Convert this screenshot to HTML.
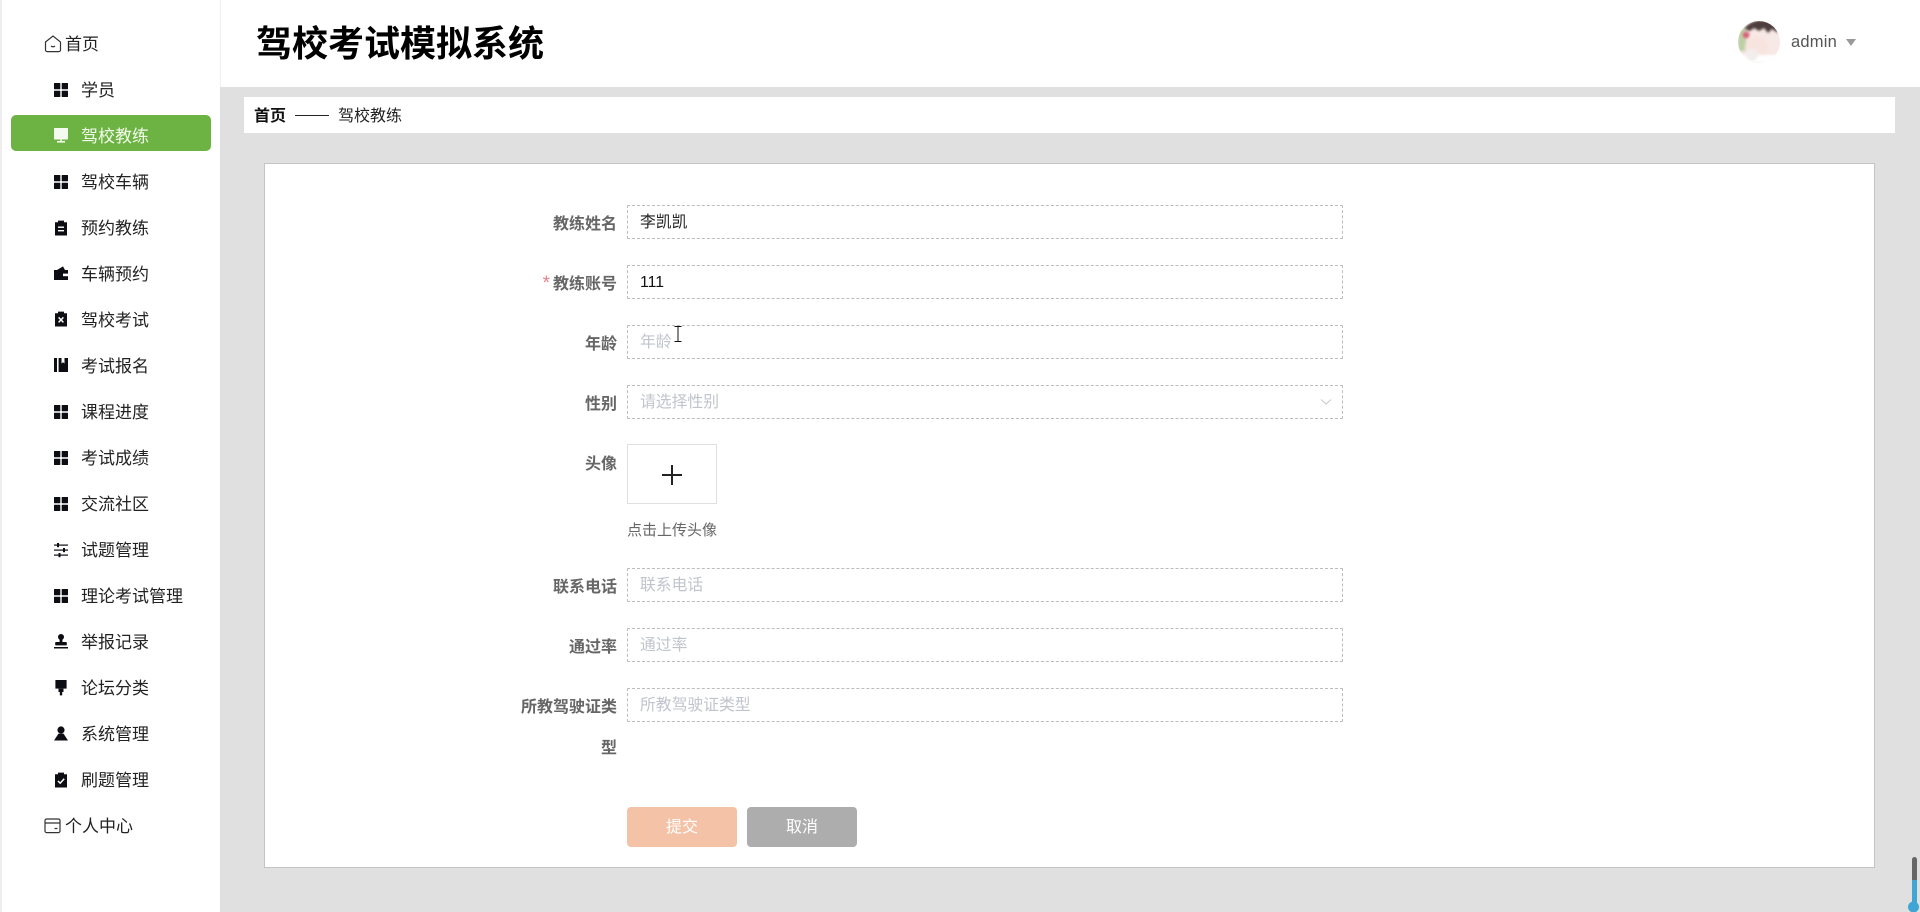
<!DOCTYPE html>
<html lang="zh-CN">
<head>
<meta charset="utf-8">
<title>驾校考试模拟系统</title>
<style>
html,body{margin:0;padding:0;width:1920px;height:912px;overflow:hidden;background:#e0e0e0;font-family:"Liberation Sans","Noto Sans CJK SC",sans-serif;}
.a{position:absolute;white-space:nowrap;}
#side{position:absolute;left:0;top:0;width:220px;height:912px;background:#fff;box-shadow:inset 2px 0 0 #eeeeee;}
#head{position:absolute;left:220px;top:0;width:1700px;height:87px;background:#fff;border-left:1px solid #f0f0f0;box-sizing:border-box;}
.m{position:absolute;left:81px;font-size:17px;line-height:24px;color:#222;white-space:nowrap;}
.i{position:absolute;left:54px;width:14px;height:16px;overflow:visible;}
.box{position:absolute;left:627px;width:716px;height:34px;border:1px dashed #bcbcbc;box-sizing:border-box;background:#fff;font-size:15.8px;line-height:33px;padding-left:12px;color:#c0c4cc;white-space:nowrap;border-radius:1px;}
.l{position:absolute;right:1303px;font-size:16px;line-height:24px;font-weight:700;color:#666;white-space:nowrap;}
.btn{position:absolute;top:807px;width:110px;height:40px;border-radius:4px;color:#fff;font-size:16px;line-height:41px;text-align:center;}
</style>
</head>
<body>
<svg width="0" height="0" style="position:absolute">
<defs>
<g id="grid" fill="#0d0d14"><rect x="0" y="1" width="6.300" height="6.300" rx=".5"/><rect x="7.700" y="1" width="6.300" height="6.300" rx=".5"/><rect x="0" y="8.700" width="6.300" height="6.300" rx=".5"/><rect x="7.700" y="8.700" width="6.300" height="6.300" rx=".5"/></g>
</defs>
</svg>

<div id="side">
  <svg class="a" style="left:44px;top:35px" width="18" height="18" viewBox="0 0 18 18" fill="none" stroke="#333" stroke-width="1.2"><path d="M1.500 7 9 1l7.500 6v8a1.600 1.600 0 0 1-1.600 1.600H3.100A1.600 1.600 0 0 1 1.500 15z"/><path d="M7 11q2 1.600 4 0"/></svg>
  <div class="m" style="left:65px;top:33px">首页</div>

  <svg class="i" style="top:82px"><use href="#grid"/></svg>
  <div class="m" style="top:79px">学员</div>

  <div class="a" style="left:11px;top:115px;width:200px;height:36px;background:#6db344;border-radius:5px"></div>
  <svg class="i" style="top:128px" viewBox="0 0 14 16"><rect x="0" y="0" width="14" height="11.500" rx=".6" fill="#f5fbef"/><rect x="3" y="13" width="8" height="1.600" fill="#f5fbef"/><rect x="6" y="11" width="2" height="2.400" fill="#dcecc9"/></svg>
  <div class="m" style="top:125px;color:#f3faec">驾校教练</div>

  <svg class="i" style="top:174px"><use href="#grid"/></svg>
  <div class="m" style="top:171px">驾校车辆</div>

  <svg class="i" style="top:220px" viewBox="0 0 14 16"><path d="M1 2.200h3V.6h6v1.600h3V15.500H1z" fill="#0d0d14"/><rect x="4" y="6.500" width="6" height="1.400" fill="#fff"/><rect x="4" y="10" width="6" height="1.400" fill="#fff"/></svg>
  <div class="m" style="top:217px">预约教练</div>

  <svg class="i" style="top:265px" viewBox="0 0 14 16"><path d="M0 5h14v10H0z" fill="#0d0d14"/><path d="M3 5l6-3.600L11 5z" fill="#0d0d14"/><rect x="9" y="8.600" width="5" height="2.600" fill="#fff"/></svg>
  <div class="m" style="top:263px">车辆预约</div>

  <svg class="i" style="top:311px" viewBox="0 0 14 16"><path d="M1 2.200h3V.6h6v1.600h3V15.500H1z" fill="#0d0d14"/><path d="M4.600 6.400l4.800 5M9.400 6.400l-4.800 5" stroke="#fff" stroke-width="1.500" fill="none"/></svg>
  <div class="m" style="top:309px">驾校考试</div>

  <svg class="i" style="top:357px" viewBox="0 0 14 16"><rect x="0" y="1" width="3" height="14" fill="#0d0d14"/><path d="M4.600 1H14v14H4.600z" fill="#0d0d14"/><path d="M7.500 1h3v5.500L9 5.300 7.500 6.500z" fill="#fff"/></svg>
  <div class="m" style="top:355px">考试报名</div>

  <svg class="i" style="top:404px"><use href="#grid"/></svg>
  <div class="m" style="top:401px">课程进度</div>

  <svg class="i" style="top:450px"><use href="#grid"/></svg>
  <div class="m" style="top:447px">考试成绩</div>

  <svg class="i" style="top:496px"><use href="#grid"/></svg>
  <div class="m" style="top:493px">交流社区</div>

  <svg class="i" style="top:542px" viewBox="0 0 14 16" fill="#0d0d14"><rect x="0" y="2.500" width="14" height="1.200"/><rect x="0" y="7.500" width="14" height="1.200"/><rect x="0" y="12.500" width="14" height="1.200"/><rect x="3" y="1" width="2" height="4.200"/><rect x="9" y="6" width="2" height="4.200"/><rect x="4.500" y="11" width="2" height="4.200"/></svg>
  <div class="m" style="top:539px">试题管理</div>

  <svg class="i" style="top:588px"><use href="#grid"/></svg>
  <div class="m" style="top:585px">理论考试管理</div>

  <svg class="i" style="top:634px" viewBox="0 0 14 16" fill="#0d0d14"><circle cx="7" cy="3" r="3"/><rect x="5.600" y="5" width="2.800" height="3.500"/><rect x="1.200" y="8" width="11.600" height="3.400" rx=".8"/><rect x="0" y="13" width="14" height="1.500"/></svg>
  <div class="m" style="top:631px">举报记录</div>

  <svg class="i" style="top:680px" viewBox="0 0 14 16" fill="#0d0d14"><rect x="1.400" y="0" width="11.200" height="8.600"/><path d="M4.500 8.600h5v3.400H8.200v3.400H5.800V12H4.500z"/></svg>
  <div class="m" style="top:677px">论坛分类</div>

  <svg class="i" style="top:726px" viewBox="0 0 14 16" fill="#0d0d14"><circle cx="7" cy="4" r="3.600"/><path d="M4.500 7.600h5L14 14.500H0z"/></svg>
  <div class="m" style="top:723px">系统管理</div>

  <svg class="i" style="top:772px" viewBox="0 0 14 16"><path d="M1 2.200h3V.6h6v1.600h3V15.500H1z" fill="#0d0d14"/><path d="M4 9l2.200 2.200L10.200 6.800" stroke="#fff" stroke-width="1.500" fill="none"/></svg>
  <div class="m" style="top:769px">刷题管理</div>

  <svg class="a" style="left:44px;top:818px" width="18" height="16" viewBox="0 0 18 16" fill="none" stroke="#333" stroke-width="1.200"><rect x="1" y="1" width="15" height="13.600" rx="1.600"/><path d="M1 5h15M10.500 10.500h3"/></svg>
  <div class="m" style="left:65px;top:815px">个人中心</div>
</div>

<div id="head"></div>
<div class="a" style="left:256px;top:18px;font-size:36px;line-height:52px;font-weight:700;color:#000;">驾校考试模拟系统</div>

<svg class="a" style="left:1738px;top:21px" width="42" height="42" viewBox="0 0 42 42">
  <defs>
    <clipPath id="c"><circle cx="21" cy="21" r="21"/></clipPath>
    <filter id="b"><feGaussianBlur stdDeviation="1.200"/></filter>
  </defs>
  <g clip-path="url(#c)">
    <rect width="42" height="42" fill="#f7e9e5"/>
    <g filter="url(#b)">
      <rect x="0" y="8" width="8" height="22" fill="#bcd0a6"/>
      <circle cx="8" cy="14" r="3.500" fill="#d8607a"/>
      <path d="M6 8Q14-3 30 0q10 4 10 12l-6-4-4 4-4-5-5 3-5-3-4 3z" fill="#4d3c3d"/>
      <ellipse cx="19" cy="27" rx="12" ry="12" fill="#f8e4df"/>
      <path d="M0 34h42v8H0z" fill="#fff"/>
      <circle cx="14" cy="34" r="6" fill="#f3eeee"/>
    </g>
  </g>
</svg>
<div class="a" style="left:1791px;top:30px;font-size:16.500px;line-height:24px;color:#555;letter-spacing:.2px">admin</div>
<div class="a" style="left:1846px;top:39px;width:0;height:0;border-left:5px solid transparent;border-right:5px solid transparent;border-top:7px solid #999"></div>

<div class="a" style="left:244px;top:97px;width:1651px;height:36px;background:#fff"></div>
<div class="a" style="left:254px;top:105px;font-size:16px;line-height:24px;font-weight:700;color:#111">首页</div>
<div class="a" style="left:295px;top:115px;width:34px;height:1px;background:#222"></div>
<div class="a" style="left:338px;top:105px;font-size:16px;line-height:24px;color:#222">驾校教练</div>

<div class="a" style="left:264px;top:163px;width:1611px;height:705px;background:#fff;border:1px solid #c4c4c4;box-sizing:border-box"></div>

<div class="l" style="top:213px">教练姓名</div>
<div class="box" style="top:205px;color:#222">李凯凯</div>

<div class="l" style="top:273px"><span style="color:#e8808c;font-weight:400;font-size:19px;line-height:0;margin-right:3px">*</span>教练账号</div>
<div class="box" style="top:265px;color:#111">111</div>

<div class="l" style="top:333px">年龄</div>
<div class="box" style="top:325px">年龄</div>
<svg class="a" style="left:674px;top:326px" width="8" height="16" viewBox="0 0 8 16" fill="none" stroke="#111" stroke-width="1"><path d="M.5.5h7M.5 15.500h7M4 .5v15"/></svg>

<div class="l" style="top:393px">性别</div>
<div class="box" style="top:385px">请选择性别</div>
<svg class="a" style="left:1320px;top:398px" width="12" height="8" viewBox="0 0 12 8" fill="none" stroke="#ccc" stroke-width="1.100"><path d="M1 1.500 6 6l5-4.500"/></svg>

<div class="l" style="top:453px">头像</div>
<div class="a" style="left:627px;top:444px;width:90px;height:60px;border:1px solid #e0e0e0;box-sizing:border-box;background:#fff"></div>
<svg class="a" style="left:662px;top:465px" width="20" height="20" viewBox="0 0 20 20" stroke="#222" stroke-width="2"><path d="M0 10h20M10 0v20"/></svg>
<div class="a" style="left:627px;top:520px;font-size:15px;line-height:22px;color:#666">点击上传头像</div>

<div class="l" style="top:576px">联系电话</div>
<div class="box" style="top:568px">联系电话</div>

<div class="l" style="top:636px">通过率</div>
<div class="box" style="top:628px">通过率</div>

<div class="l" style="top:696px">所教驾驶证类</div>
<div class="box" style="top:688px">所教驾驶证类型</div>
<div class="l" style="top:737px">型</div>

<div class="btn" style="left:627px;background:#f4c3a7">提交</div>
<div class="btn" style="left:747px;background:#adadad">取消</div>

<svg class="a" style="left:1905px;top:855px" width="15" height="57" viewBox="0 0 15 57">
  <rect x="7" y="2" width="5" height="26" rx="2.500" fill="#666"/>
  <rect x="7" y="25" width="5" height="24" fill="#3fa5d5"/>
  <circle cx="8.500" cy="52" r="5.500" fill="#3fa5d5"/>
</svg>
</body>
</html>
